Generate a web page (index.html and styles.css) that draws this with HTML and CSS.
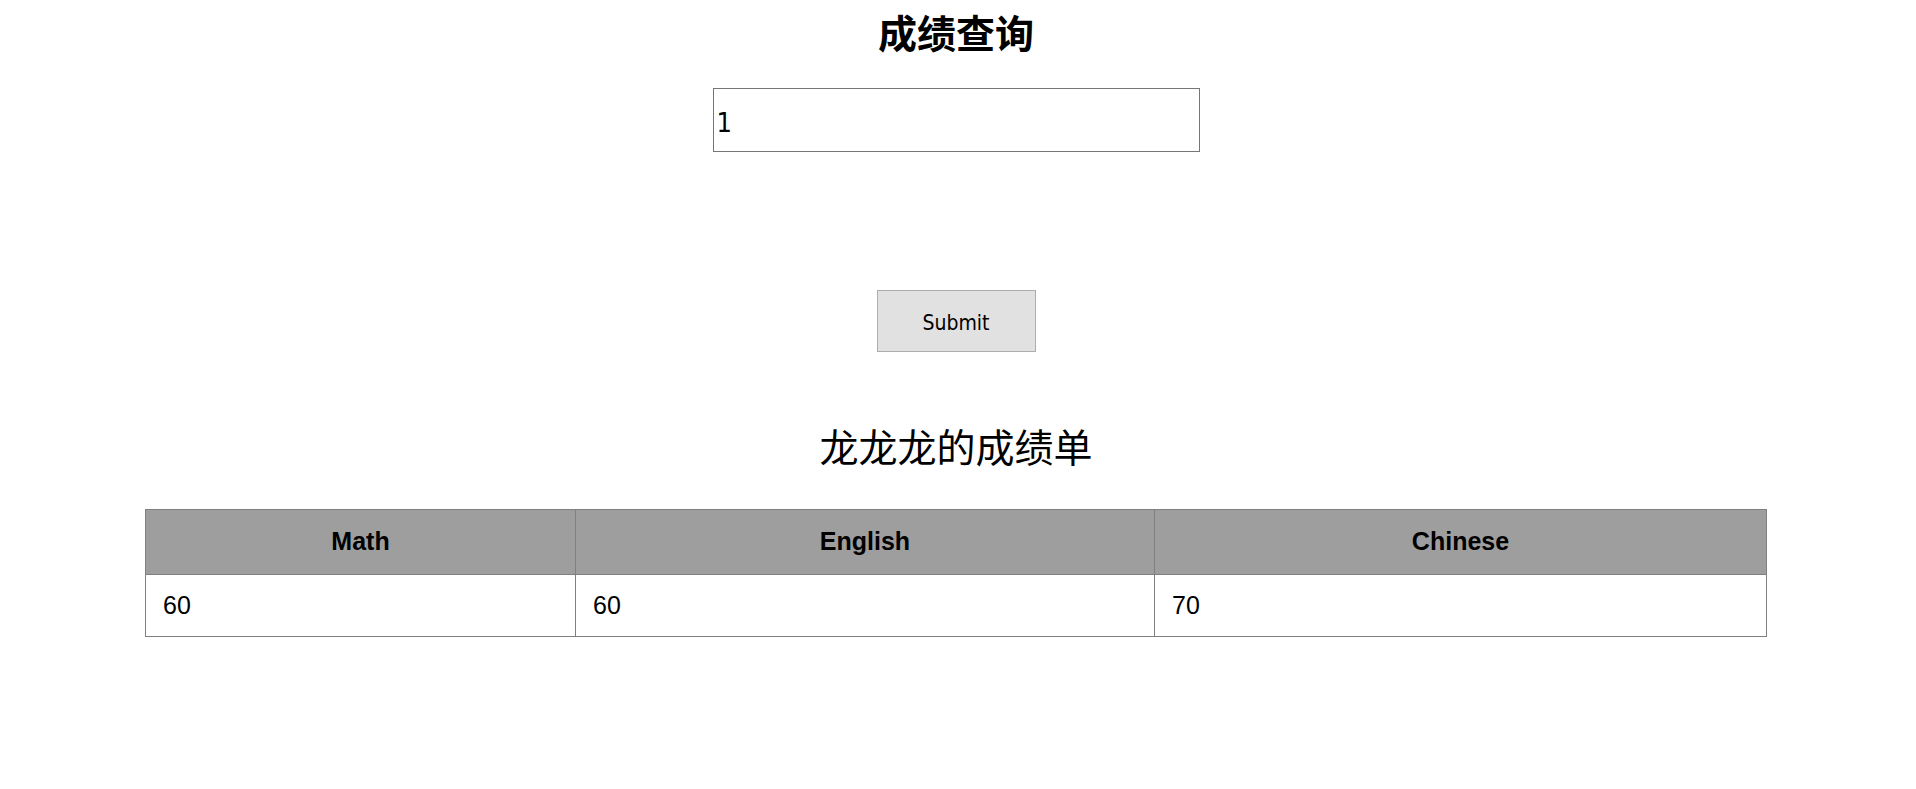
FILE: index.html
```html
<!DOCTYPE html>
<html lang="zh-CN">
<head>
<meta charset="utf-8">
<title>成绩查询</title>
<link rel="stylesheet" href="styles.css">
</head>
<body>
<main class="page">
  <h1 class="title">成绩查询</h1>
  <form class="query-form">
    <input class="query-input" type="text" value="1">
    <button class="submit-btn" type="button">Submit</button>
  </form>
  <h2 class="report-title">龙龙龙的成绩单</h2>
  <table class="score-table">
    <colgroup>
      <col class="col-math">
      <col class="col-english">
      <col class="col-chinese">
    </colgroup>
    <thead>
      <tr><th>Math</th><th>English</th><th>Chinese</th></tr>
    </thead>
    <tbody>
      <tr><td>60</td><td>60</td><td>70</td></tr>
    </tbody>
  </table>
</main>
</body>
</html>
```

FILE: styles.css
```css
html, body {
  margin: 0;
  padding: 0;
  background: #ffffff;
}

.page {
  width: 1912px;
  display: flex;
  flex-direction: column;
  align-items: center;
  font-family: "Liberation Sans", Arial, sans-serif;
  color: #000;
}

.title {
  margin: 6px 0 0;
  font-family: "Noto Sans CJK SC", sans-serif;
  font-size: 39px;
  font-weight: 700;
  line-height: 51px;
}

.query-form {
  display: flex;
  flex-direction: column;
  align-items: center;
  margin-top: 31px;
}

.query-input {
  box-sizing: border-box;
  width: 487px;
  height: 64px;
  margin: 0;
  padding: 5px 3px 1px;
  border: 1px solid #767676;
  border-radius: 0;
  font-family: "DejaVu Sans Condensed", "DejaVu Sans", sans-serif;
  font-stretch: condensed;
  font-size: 27px;
  color: #000;
  background: #fff;
  outline: none;
}

.submit-btn {
  box-sizing: border-box;
  width: 159px;
  height: 62px;
  margin-top: 138px;
  padding: 4px 0 0;
  border: 1px solid #adadad;
  border-radius: 0;
  background: #e1e1e1;
  font-family: "DejaVu Sans Condensed", "DejaVu Sans", sans-serif;
  font-stretch: condensed;
  font-size: 21px;
  color: #000;
}

.report-title {
  margin: 68px 0 0;
  font-family: "Noto Sans CJK SC", sans-serif;
  font-size: 39px;
  font-weight: 400;
  line-height: 50px;
}

.score-table {
  margin-top: 39px;
  width: 1621px;
  table-layout: fixed;
  border-collapse: collapse;
  font-size: 25px;
  line-height: 29px;
}

.col-math { width: 430px; }
.col-english { width: 579px; }
.col-chinese { width: 612px; }

.score-table th,
.score-table td {
  border: 1px solid #808080;
}

.score-table th {
  background: #9e9e9e;
  font-weight: 700;
  text-align: center;
  padding: 17px 16px 18px;
}

.score-table td {
  text-align: left;
  padding: 16px 16px 16px 17px;
}
```
